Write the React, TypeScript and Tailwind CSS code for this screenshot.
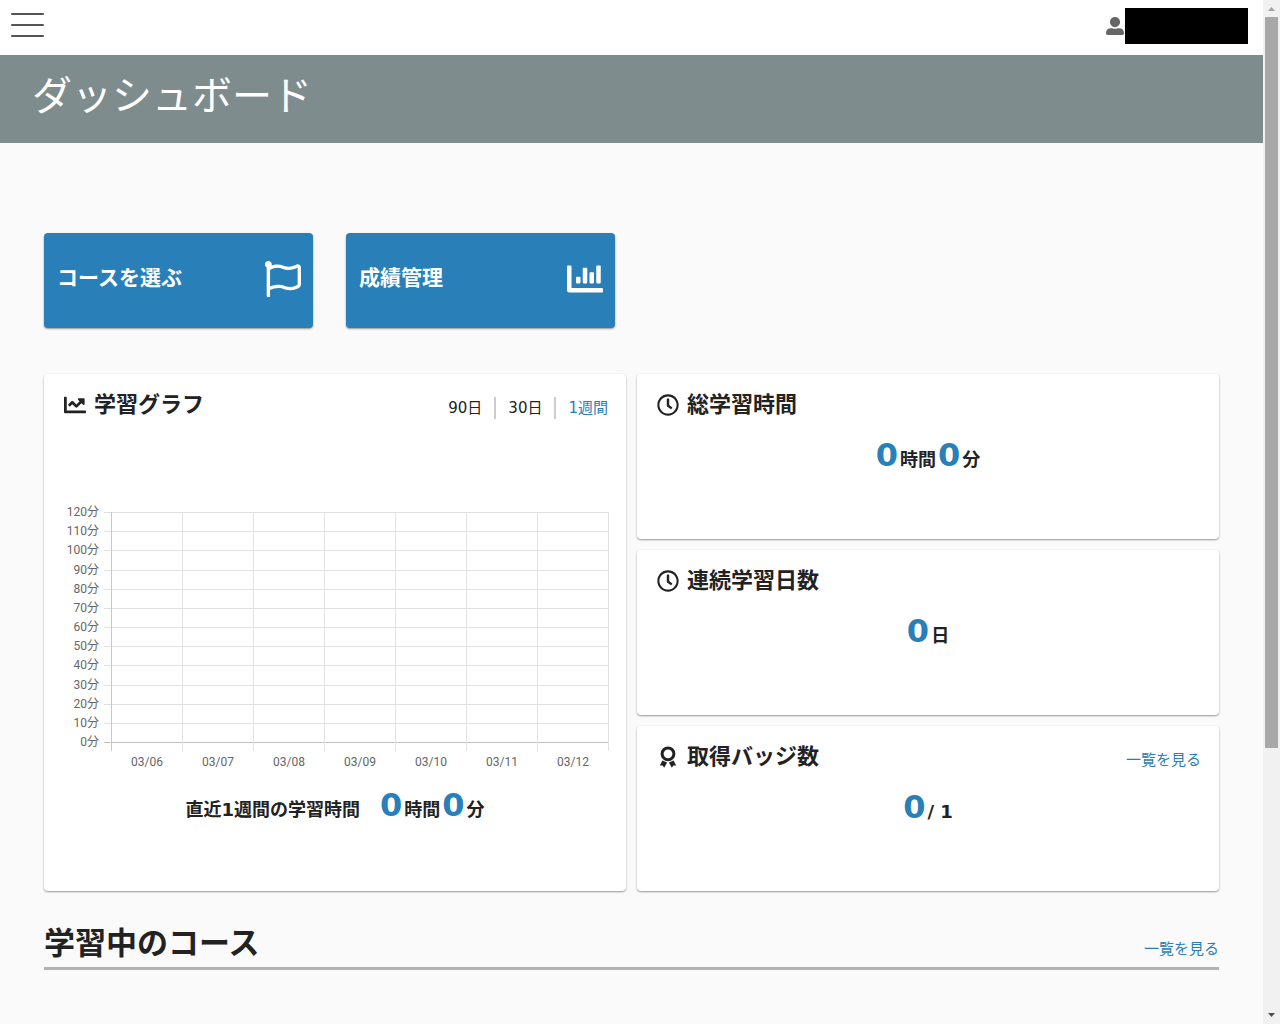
import React from 'react';
import {
  FaChartBar,
  FaChartLine,
  FaRegClock,
  FaRegFlag,
  FaUserAlt
} from 'react-icons/fa';

const periods = ['90日', '30日', '1週間'];
const days = ['03/06', '03/07', '03/08', '03/09', '03/10', '03/11', '03/12'];
const minutes = [120, 110, 100, 90, 80, 70, 60, 50, 40, 30, 20, 10, 0];

// Chart geometry
const LEFT = 51;
const TOP = 5;
const COL = 71;
const HEIGHT = 230;
const RIGHT = LEFT + COL * days.length;

const StudyChart = () => (
  <svg viewBox="0 0 550 264" className="block w-full overflow-visible font-[Roboto,'Noto_Sans_CJK_JP',sans-serif] text-[12px]">
    {minutes.map((m, i) => {
      const y = TOP + Math.round((HEIGHT / (minutes.length - 1)) * i);
      return (
        <g key={m}>
          <line
            x1={LEFT - 7}
            x2={RIGHT + 1}
            y1={y + 0.5}
            y2={y + 0.5}
            stroke={m === 0 ? '#bfbfbf' : '#e2e2e2'}
          />
          <text x={LEFT - 12} y={y + 4} textAnchor="end" fill="#666">{m}分</text>
        </g>
      );
    })}
    {[...days, ''].map((day, i) => {
      const x = LEFT + COL * i;
      return (
        <g key={i}>
          <line
            x1={x + 0.5}
            x2={x + 0.5}
            y1={TOP}
            y2={TOP + HEIGHT + 9}
            stroke={i === 0 ? '#c8c8c8' : '#e2e2e2'}
          />
          <text x={x + 36} y={TOP + HEIGHT + 24} textAnchor="middle" fill="#666">{day}</text>
        </g>
      );
    })}
  </svg>
);

const BadgeIcon = () => (
  <svg viewBox="0 0 22 22" className="w-[22px]" fill="currentColor">
    <circle cx="11" cy="7.800" r="5.900" fill="none" stroke="currentColor" strokeWidth="3" />
    <path d="M5.400 14.600 2.800 19.600l2.800-.1 1.600 2.300 2.900-5.400z" />
    <path d="M16.600 14.600l2.600 5-2.800-.1-1.600 2.300-2.900-5.400z" />
  </svg>
);

interface CardProps {
  icon: React.ReactNode;
  title: string;
  action?: React.ReactNode;
  children: React.ReactNode;
}

const Card = ({ icon, title, action, children }: CardProps) => (
  <section className="min-h-[165px] rounded-[4px] bg-white pt-[15px] shadow-[0_1px_2px_rgba(0,0,0,0.4)]">
    <div className="flex items-center justify-between pr-[18px] pl-5">
      <h3 className="flex items-center gap-2 text-[22px] leading-8 font-bold">
        <span className="flex w-[22px] justify-center">{icon}</span>
        {title}
      </h3>
      {action}
    </div>
    {children}
  </section>
);

const Num = ({ value }: { value: number }) => (
  <span className="text-[32px] text-[#2980b9]">{value}</span>
);

const Stat = ({ children }: { children: React.ReactNode }) => (
  <p className="mt-3.5 flex items-baseline justify-center gap-0.5 text-[18px] leading-10 font-bold">
    {children}
  </p>
);

const MenuCard = ({ label, icon }: { label: string; icon: React.ReactNode }) => (
  <a
    href="#"
    className="flex h-[95px] items-center justify-between rounded-[4px] bg-[#2980b9] pr-3 pb-1 pl-[13px] text-[21px] font-bold text-white shadow-[0_1px_2px_rgba(0,0,0,0.4)]"
  >
    {label}
    {icon}
  </a>
);

const ListLink = () => (
  <a href="#" className="pt-1.5 text-[15px] leading-6 text-[#2980b9]">一覧を見る</a>
);

const ScrollBar = () => (
  <div aria-hidden="true" className="sticky top-0 flex h-screen w-[17px] shrink-0 flex-col items-center bg-[#f1f1f1]">
    <svg viewBox="0 0 17 17" className="w-[17px] shrink-0">
      <path d="M5 11 8.500 7l3.500 4z" fill="#a3a3a3" />
    </svg>
    <div className="w-[13px] flex-[731] bg-[#a8a8a8]" />
    <div className="flex-[259]" />
    <svg viewBox="0 0 17 17" className="w-[17px] shrink-0">
      <path d="M5 6h7L8.500 10z" fill="#505050" />
    </svg>
  </div>
);

const App = () => {
  return (
    <div className="flex min-h-screen bg-[#fafafa] font-['DejaVu_Sans','Noto_Sans_CJK_JP',sans-serif] text-[#222]">
      <div className="min-w-0 flex-1">
        <header className="flex h-[55px] items-center justify-between bg-white pr-[15px] pb-[3px] pl-[11px]">
          <button type="button" aria-label="メニュー" className="flex w-[33px] flex-col gap-[9px] pb-0.5">
            <span className="h-0.5 rounded-full bg-[#555]" />
            <span className="h-0.5 rounded-full bg-[#555]" />
            <span className="h-0.5 rounded-full bg-[#555]" />
          </button>
          <button type="button" aria-label="アカウント" className="flex items-center gap-px">
            <FaUserAlt className="size-[18px] text-[#666]" />
            <span className="h-9 w-[123px] bg-black" />
          </button>
        </header>

        <div className="h-[88px] bg-[#7f8c8d] px-8 pt-[11px]">
          <h1 className="text-[40px] leading-[60px] text-white">ダッシュボード</h1>
        </div>

        <main className="px-11 pt-[90px] pb-10">
          <nav className="grid grid-cols-4 gap-[33px]">
            <MenuCard label="コースを選ぶ" icon={<FaRegFlag className="size-9" />} />
            <MenuCard label="成績管理" icon={<FaChartBar className="size-9" />} />
          </nav>

          <div className="mt-[46px] grid grid-cols-2 gap-[11px]">
            <Card
              icon={<FaChartLine />}
              title="学習グラフ"
              action={
                <div className="flex items-center divide-x-2 divide-[#ccc] pt-1.5">
                  {periods.map(period => (
                    <button
                      key={period}
                      type="button"
                      className={period === '1週間'
                        ? 'pl-3 text-[15px] leading-[22px] text-[#2980b9]'
                        : 'px-3 text-[15px] leading-[22px]'}
                    >
                      {period}
                    </button>
                  ))}
                </div>
              }
            >
              <div className="mt-[86px] px-4">
                <StudyChart />
              </div>
              <Stat>
                <span className="mr-[18px]">直近1週間の学習時間</span>
                <Num value={0} />
                <span>時間</span>
                <Num value={0} />
                <span>分</span>
              </Stat>
            </Card>

            <div className="grid gap-[11px]">
              <Card icon={<FaRegClock />} title="総学習時間">
                <Stat>
                  <Num value={0} />
                  <span>時間</span>
                  <Num value={0} />
                  <span>分</span>
                </Stat>
              </Card>
              <Card icon={<FaRegClock />} title="連続学習日数">
                <Stat>
                  <Num value={0} />
                  <span>日</span>
                </Stat>
              </Card>
              <Card icon={<BadgeIcon />} title="取得バッジ数" action={<ListLink />}>
                <Stat>
                  <Num value={0} />
                  <span>/ 1</span>
                </Stat>
              </Card>
            </div>
          </div>

          <div className="mt-7 flex items-baseline justify-between border-b-[3px] border-[#b3b3b3]">
            <h2 className="text-[31px] leading-[48px] font-bold">学習中のコース</h2>
            <ListLink />
          </div>
        </main>
      </div>
      <ScrollBar />
    </div>
  );
};

export default App;
